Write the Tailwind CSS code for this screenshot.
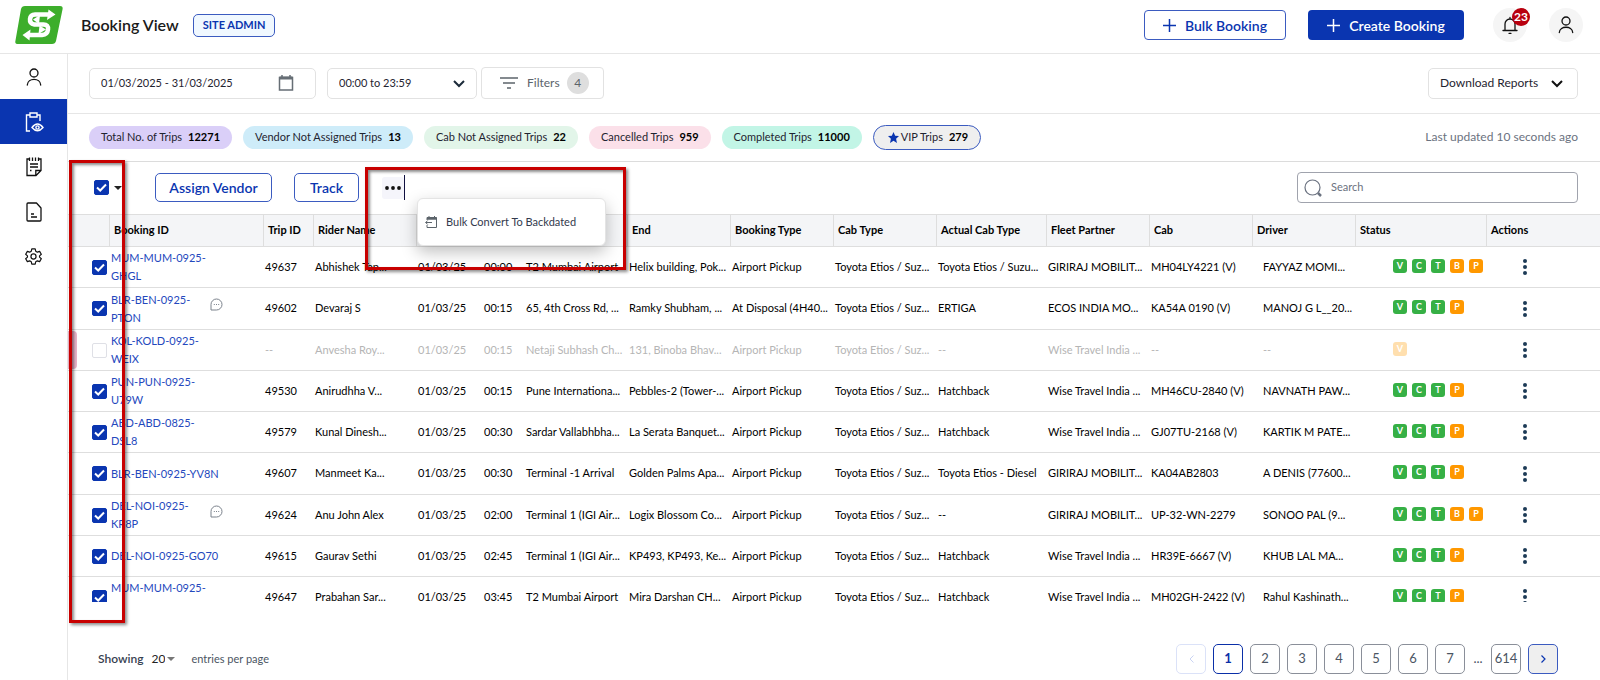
<!DOCTYPE html>
<html lang="en">
<head>
<meta charset="utf-8">
<meta name="viewport" content="width=device-width, initial-scale=1">
<title>Booking View</title>
<script src="https://cdn.jsdelivr.net/npm/@tailwindcss/browser@4"></script>
</head>
<body class="relative flex h-screen flex-col overflow-hidden bg-white font-['Lato',sans-serif] text-[11px] text-[#1f2430]">

<header class="flex h-[54px] shrink-0 items-center border-b border-[#e6e6e6] pr-[17px] pb-[3px] pl-[15px]">
  <svg class="h-[39px] w-[48px]" viewBox="0 0 48 39" aria-label="Logo">
    <path d="M10 0h35q3 0 2.600 3L41 35q-.8 3-4 3H3q-3.300 0-2.600-3L6 3q.8-3 4-3z" fill="#3dae2b"/>
    <path d="M35 8.500H17.500q-3 0-3.500 2.500l-.6 3.500q-.4 3 2.600 3H28M20 13.500h13q3.500 0 3 3l-1.500 8q-.8 3.500-4 3.500H13" fill="none" stroke="#fff" stroke-width="0"/>
    <path d="M34.500 8.500H20q-4.500 0-5 4.500t4.500 5.500H28.500q5 0 4.500 5t-6 5.500H13" fill="none" stroke="#fff" stroke-width="4.500"/>
    <path d="M33.500 3.500 40.500 8.500l-8.500 5.500zM15.500 23.500 7.500 29l7 5.500zM25 9 18 13.500l6 4.500zM24.500 19.500l6.500 4-7.500 4.500z" fill="#fff"/>
  </svg>
  <h1 class="ml-[18px] text-[16px] leading-6 font-semibold text-[#1a1a1a]">Booking View</h1>
  <span class="ml-[14px] flex h-[23px] items-center rounded-[5px] border border-[#3b5bc0] bg-[#f0f8ff] px-[9px] font-bold text-[#0a35b0]">SITE ADMIN</span>
  <div class="ml-auto flex items-center">
    <button class="flex h-[30px] w-[142px] items-center justify-center gap-[9px] rounded-[4px] border border-[#3b5bc0] text-[14px] font-semibold text-[#0a35b0]">
      <svg class="size-[13px]" viewBox="0 0 13 13" stroke="currentColor" stroke-width="1.500"><path d="M6.500 0v13M0 6.500h13"/></svg>Bulk Booking</button>
    <button class="ml-[22px] flex h-[30px] w-[156px] items-center justify-center gap-[9px] rounded-[4px] bg-[#0a35b0] text-[14px] font-semibold text-white">
      <svg class="size-[13px]" viewBox="0 0 13 13" stroke="currentColor" stroke-width="1.500"><path d="M6.500 0v13M0 6.500h13"/></svg>Create Booking</button>
    <button aria-label="Notifications" class="relative ml-[29px] grid size-[34px] place-items-center rounded-full bg-[#f5f5f5]">
      <svg class="size-[20px]" viewBox="0 0 20 20" fill="none" stroke="#111" stroke-width="1.300" stroke-linecap="round"><path d="M3 15.500h14M5 15.500V9a5 5 0 0 1 10 0v6.500M9 18.300h2M10 4V2.500"/></svg>
      <span class="absolute -right-[3px] top-0 grid size-[18px] place-items-center rounded-full bg-[#b8000f] text-[12px] font-bold text-white">23</span>
    </button>
    <button aria-label="Account" class="ml-[22px] grid size-[34px] place-items-center rounded-full bg-[#f5f5f5]">
      <svg class="size-[18px]" viewBox="0 0 18 18" fill="none" stroke="#111" stroke-width="1.300" stroke-linecap="round"><circle cx="9" cy="5" r="4"/><path d="M2.300 16.500c.5-7 13-7 13.400 0"/></svg>
    </button>
  </div>
</header>

<div class="flex min-h-0 flex-1">
  <nav class="flex w-[68px] shrink-0 flex-col border-r border-[#e6e6e6]" aria-label="Main">
    <a href="#" aria-label="Users" class="grid h-[45px] place-items-center text-[#111]"><svg class="size-[18px]" viewBox="0 0 18 18" fill="none" stroke="currentColor" stroke-width="1.300" stroke-linecap="round"><circle cx="9" cy="5" r="4"/><path d="M2.300 17c.5-7.500 13-7.500 13.400 0"/></svg></a>
    <a href="#" aria-label="Bookings" aria-current="page" class="grid h-[45px] place-items-center bg-[#0a35b0] text-white"><svg class="size-[20px]" viewBox="0 0 20 20" fill="none" stroke="currentColor" stroke-width="1.400"><path d="M6 19H2.500V3H6M13 3h3v6"/><path d="M6 1h7v4H6z"/><path d="M8 15.500q5.500-7 11 0-5.500 6.500-11 0z"/><circle cx="13.500" cy="15.500" r="1.600"/></svg></a>
    <a href="#" aria-label="Duty slips" class="grid h-[45px] place-items-center text-[#111]"><svg class="size-[20px]" viewBox="0 0 20 20" fill="none" stroke="currentColor" stroke-width="1.300"><path d="M5.500 2H3v16.500h9l5-5V2h-2.500M11.800 18.500v-5H17"/><path d="M5.500.5V4M8.500.5V4M11.500.5V4M14.500.5V4M6 7h8M6 10h8M6 13.500h1.500" /></svg></a>
    <a href="#" aria-label="Documents" class="grid h-[45px] place-items-center text-[#111]"><svg class="size-[20px]" viewBox="0 0 20 20" fill="none" stroke="currentColor" stroke-width="1.300" stroke-linejoin="round"><path d="M4 1h8.500L17 6v12q0 1-1 1H4q-1 0-1-1V2q0-1 1-1zM7 12h3M7 15h6"/></svg></a>
    <a href="#" aria-label="Settings" class="grid h-[45px] place-items-center text-[#111]"><svg class="size-[17px]" viewBox="0 0 20 20" fill="none" stroke="currentColor" stroke-width="1.400" stroke-linejoin="round"><path d="M8 1h4l.6 2.800 1.900 1.100 2.700-.9 2 3.400-2.100 1.900v1.400l2.100 1.900-2 3.400-2.700-.9-1.900 1.100L12 19H8l-.6-2.800-1.900-1.100-2.700.9-2-3.400 2.100-1.900V9.300L.8 7.400l2-3.400 2.700.9 1.900-1.100z"/><circle cx="10" cy="10" r="3"/></svg></a>
  </nav>

  <main class="flex min-w-0 flex-1 flex-col">
    <section class="flex h-[60px] shrink-0 items-center border-b border-[#e6e6e6] pr-[22px] pb-px pl-[21px]" aria-label="Filters">
      <label class="flex h-[31px] w-[227px] items-center rounded-[5px] border border-[#e2e2e2] px-[11px]">
        <input type="text" aria-label="Date range" value="01/03/2025 - 31/03/2025" class="w-0 flex-1 outline-none">
        <svg class="mr-[10px] size-[16px]" viewBox="0 0 16 16" fill="none" stroke="#666e75" stroke-width="1.500"><path d="M1.500 2.500h13v12.500h-13z"/><path d="M1.500 3h13" stroke-width="3"/><path d="M4 0v2M12 0v2"/></svg>
      </label>
      <div class="relative ml-[11px]">
        <select aria-label="Time range" class="h-[31px] w-[150px] appearance-none rounded-[5px] border border-[#e2e2e2] bg-white px-[11px]"><option>00:00 to 23:59</option></select>
        <svg class="pointer-events-none absolute top-[12px] right-[12px] h-[8px] w-[12px]" viewBox="0 0 12 8" fill="none" stroke="#1c2b3a" stroke-width="2"><path d="m1 1 5 5 5-5"/></svg>
      </div>
      <button class="ml-1 flex h-[32px] w-[123px] items-center rounded-[4px] border border-[#e2e2e2] pl-[18px] text-[12px] text-[#5c646b]">
        <svg class="h-[12px] w-[18px]" viewBox="0 0 18 12" stroke="#5c646b" stroke-width="1.500"><path d="M0 1h18M3 6h12M7 11h4"/></svg>
        <span class="ml-[9px]">Filters</span>
        <span class="ml-[7px] grid size-[22px] place-items-center rounded-full bg-[#dedede]">4</span>
      </button>
      <div class="relative ml-auto">
        <select aria-label="Download Reports" class="h-[31px] w-[150px] appearance-none rounded-[5px] border border-[#e2e2e2] bg-white px-[11px] text-[12px]"><option>Download Reports</option></select>
        <svg class="pointer-events-none absolute top-[12px] right-[15px] h-[8px] w-[12px]" viewBox="0 0 12 8" fill="none" stroke="#111" stroke-width="2"><path d="m1 1 5 5 5-5"/></svg>
      </div>
    </section>

    <section class="flex h-[48px] shrink-0 items-center gap-[11px] border-b border-[#dcdcdc] pr-[22px] pb-px pl-[21px]" aria-label="Trip totals">
      <button class="flex h-[23px] items-center gap-[6px] rounded-full bg-[#dacff8] px-[12px]">Total No. of Trips <b class="text-black">12271</b></button>
      <button class="flex h-[23px] items-center gap-[6px] rounded-full bg-[#ceecf9] px-[12px]">Vendor Not Assigned Trips <b class="text-black">13</b></button>
      <button class="flex h-[23px] items-center gap-[6px] rounded-full bg-[#e2f5e9] px-[12px]">Cab Not Assigned Trips <b class="text-black">22</b></button>
      <button class="flex h-[23px] items-center gap-[6px] rounded-full bg-[#fbe0e9] px-[12px]">Cancelled Trips <b class="text-black">959</b></button>
      <button class="flex h-[23px] items-center gap-[6px] rounded-full bg-[#c2f5e6] px-[12px]">Completed Trips <b class="text-black">11000</b></button>
      <button class="flex h-[25px] items-center gap-[6px] rounded-full border border-[#3b5bc0] bg-[#efefef] pr-[12px] pl-[14px]"><span class="flex items-center gap-[2px]"><svg class="size-[11px]" viewBox="0 0 20 20" fill="#0a35b0"><path d="m10 0 3 6.700 7 .7-5.300 4.800L16.300 20 10 16l-6.300 4 1.600-7.800L0 7.400l7-.7z"/></svg>VIP Trips</span> <b class="text-black">279</b></button>
      <span class="ml-auto text-[12px] text-[#6b7280]">Last updated 10 seconds ago</span>
    </section>

    <section class="flex h-[52px] shrink-0 items-center pr-[22px] pb-px pl-[26px]" aria-label="Actions">
      <label class="relative flex">
        <input type="checkbox" checked aria-label="Select all" class="peer size-[15px] appearance-none rounded-[2px] border border-[#dcdcdc] checked:border-[#0a35b0] checked:bg-[#0a35b0]">
        <svg class="absolute inset-0 hidden size-[15px] peer-checked:block" viewBox="0 0 15 15" fill="none" stroke="#fff" stroke-width="2"><path d="m3 7.500 3.200 3L12 4.500"/></svg>
      </label>
      <button aria-label="Selection options" class="ml-[5px]"><svg class="h-[4px] w-[8px]" viewBox="0 0 8 4"><path d="M0 0h8L4 4z" fill="#222"/></svg></button>
      <button class="ml-[33px] h-[29px] w-[117px] rounded-[5px] border border-[#3b5bc0] text-[14px] font-semibold text-[#0a35b0]">Assign Vendor</button>
      <button class="ml-[22px] h-[29px] w-[65px] rounded-[5px] border border-[#3b5bc0] text-[14px] font-semibold text-[#0a35b0]">Track</button>
      <div class="relative ml-[23px] flex items-center">
        <button aria-label="More actions" class="grid h-[22px] w-[22px] place-items-center rounded-[3px] bg-[#f5f5fb]"><svg class="h-[4px] w-[16px]" viewBox="0 0 16 4" fill="#111"><circle cx="2" cy="2" r="1.900"/><circle cx="8" cy="2" r="1.900"/><circle cx="14" cy="2" r="1.900"/></svg></button>
        <span class="h-[25px] w-px bg-[#101040]"></span>
        <div role="menu" class="absolute top-[23px] left-[35px] z-10 rounded-[6px] border border-[#e4e4e4] bg-white shadow-[0_6px_16px_rgba(0,0,0,0.25)]">
          <button role="menuitem" class="flex h-[46px] w-[187px] items-center gap-[9px] pl-[7px] text-[#333a4d]">
            <svg class="size-[12px]" viewBox="0 0 12 12" fill="none" stroke="#5c646b"><path d="M2 4V1.500h9.500v10H2V9"/><path d="M2 2.500h9.500" stroke-width="2.500"/><path d="M7 6.500H.7M2.700 4.500l-2 2 2 2M4 0v2M9.500 0v2"/></svg>
            Bulk Convert To Backdated</button>
        </div>
      </div>
      <label class="ml-auto flex h-[31px] w-[281px] items-center gap-[9px] rounded-[4px] border border-[#a0a3ad] pl-[6px]">
        <svg class="size-[18px]" viewBox="0 0 18 18" fill="none" stroke="#6b7280"><circle cx="8.500" cy="8.500" r="7.500" stroke-width="1.200"/><path d="m14 14 3 3" stroke-width="2.500"/></svg>
        <input type="search" aria-label="Search" placeholder="Search" class="w-0 flex-1 outline-none placeholder:text-[#6b7280]">
      </label>
    </section>

    <div class="h-[388px] shrink-0 overflow-hidden">
      <table class="w-full table-fixed border-separate border-spacing-0 whitespace-nowrap">
        <colgroup>
          <col class="w-[41px]"><col class="w-[154px]"><col class="w-[50px]"><col class="w-[103px]"><col class="w-[66px]"><col class="w-[42px]"><col class="w-[103px]"><col class="w-[103px]"><col class="w-[103px]"><col class="w-[103px]"><col class="w-[110px]"><col class="w-[103px]"><col class="w-[103px]"><col class="w-[103px]"><col class="w-[131px]"><col>
        </colgroup>
        <thead>
          <tr class="h-[33px] bg-[#f4f5f7] text-left text-black [&>th]:border-y [&>th]:border-y-[#dedede] [&>th]:pl-1 [&>th]:font-bold [&>th+th]:border-l [&>th+th]:border-l-[#dedede]">
            <th aria-label="Select"></th><th>Booking ID</th><th>Trip ID</th><th>Rider Name</th><th aria-label="Date"></th><th aria-label="Time"></th><th aria-label="Start"></th><th>End</th><th>Booking Type</th><th>Cab Type</th><th>Actual Cab Type</th><th>Fleet Partner</th><th>Cab</th><th>Driver</th><th>Status</th><th>Actions</th>
          </tr>
        </thead>
        <tbody id="rows"></tbody>
      </table>
    </div>

    <footer class="flex flex-1 items-center pt-[36px] pr-[42px] pl-[30px]">
      <label class="flex items-center text-[#4b5563]"><b class="text-[12px] font-semibold text-[#374151]">Showing</b>
        <select class="ml-[8px] appearance-none text-[12px] text-[#222]"><option>20</option></select>
        <svg class="ml-[2px] h-[4px] w-[8px]" viewBox="0 0 8 4"><path d="M0 0h8L4 4z" fill="#777"/></svg>
        <span class="ml-[16px]">entries per page</span></label>
      <nav aria-label="Pages" class="ml-auto flex items-center gap-[7px] text-[13px] text-[#4b5563] [&>button]:grid [&>button]:size-[30px] [&>button]:place-items-center [&>button]:rounded-[5px] [&>button]:border">
        <button disabled aria-label="Previous" class="border-[#dbe2f8]"><svg class="h-[8px] w-[5px]" viewBox="0 0 5 8" fill="none" stroke="#c9d3f3"><path d="M4.500.5 1 4l3.500 3.500"/></svg></button>
        <button aria-current="page" class="border-2 border-[#0a2fa8] font-bold text-[#0a2fa8]">1</button>
        <button class="border-[#8a8f99]">2</button>
        <button class="border-[#8a8f99]">3</button>
        <button class="border-[#8a8f99]">4</button>
        <button class="border-[#8a8f99]">5</button>
        <button class="border-[#8a8f99]">6</button>
        <button class="border-[#8a8f99]">7</button>
        <span class="w-[12px] text-center">...</span>
        <button class="border-[#8a8f99]">614</button>
        <button aria-label="Next" class="border-[#3b5bc0] bg-[#efefef]"><svg class="h-[8px] w-[5px]" viewBox="0 0 5 8" fill="none" stroke="#0a35b0" stroke-width="1.200"><path d="M.5.5 4 4 .5 7.500"/></svg></button>
      </nav>
    </footer>
  </main>
</div>

<!-- Highlight frames -->
<div class="pointer-events-none absolute top-[160px] left-[69px] z-20 h-[463px] w-[56px] border-[3px] border-[#c80000] shadow-[2px_2px_3px_rgba(0,0,0,0.45),inset_2px_2px_3px_rgba(0,0,0,0.45)]"></div>
<div class="pointer-events-none absolute top-[167px] left-[365px] z-20 h-[103px] w-[261px] border-[3px] border-[#c80000] shadow-[2px_2px_3px_rgba(0,0,0,0.45),inset_2px_2px_3px_rgba(0,0,0,0.45)]"></div>

<script>
// id, trip, rider, time, start, end, type, cab type, actual cab, fleet, cab, driver, status, has comment
const rows = [
  ["MUM-MUM-0925-<br>GHGL","49637","Abhishek Tap...","00:00","T2 Mumbai Airport","Helix building, Pok...","Airport Pickup","Toyota Etios / Suz...","Toyota Etios / Suzu...","GIRIRAJ MOBILIT...","MH04LY4221 (V)","FAYYAZ MOMI...","VCTBP",0],
  ["BLR-BEN-0925-<br>PTON","49602","Devaraj S","00:15","65, 4th Cross Rd, ...","Ramky Shubham, ...","At Disposal (4H40...","Toyota Etios / Suz...","ERTIGA","ECOS INDIA MO...","KA54A 0190 (V)","MANOJ G L__20...","VCTP",1],
  ["KOL-KOLD-0925-<br>WEIX","--","Anvesha Roy...","00:15","Netaji Subhash Ch...","131, Binoba Bhav...","Airport Pickup","Toyota Etios / Suz...","--","Wise Travel India ...","--","--","V",0],
  ["PUN-PUN-0925-<br>U79W","49530","Anirudhha V...","00:15","Pune Internationa...","Pebbles-2 (Tower-...","Airport Pickup","Toyota Etios / Suz...","Hatchback","Wise Travel India ...","MH46CU-2840 (V)","NAVNATH PAW...","VCTP",0],
  ["ABD-ABD-0825-<br>DSL8","49579","Kunal Dinesh...","00:30","Sardar Vallabhbha...","La Serata Banquet...","Airport Pickup","Toyota Etios / Suz...","Hatchback","Wise Travel India ...","GJ07TU-2168 (V)","KARTIK M PATE...","VCTP",0],
  ["BLR-BEN-0925-YV8N","49607","Manmeet Ka...","00:30","Terminal -1 Arrival","Golden Palms Apa...","Airport Pickup","Toyota Etios / Suz...","Toyota Etios - Diesel","GIRIRAJ MOBILIT...","KA04AB2803","A DENIS (77600...","VCTP",0],
  ["DEL-NOI-0925-<br>KR8P","49624","Anu John Alex","02:00","Terminal 1 (IGI Air...","Logix Blossom Co...","Airport Pickup","Toyota Etios / Suz...","--","GIRIRAJ MOBILIT...","UP-32-WN-2279","SONOO PAL (9...","VCTBP",1],
  ["DEL-NOI-0925-GO70","49615","Gaurav Sethi","02:45","Terminal 1 (IGI Air...","KP493, KP493, Ke...","Airport Pickup","Toyota Etios / Suz...","Hatchback","Wise Travel India ...","HR39E-6667 (V)","KHUB LAL MA...","VCTP",0],
  ["MUM-MUM-0925-<br>&nbsp;","49647","Prabahan Sar...","03:45","T2 Mumbai Airport","Mira Darshan CH...","Airport Pickup","Toyota Etios / Suz...","Hatchback","Wise Travel India ...","MH02GH-2422 (V)","Rahul Kashinath...","VCTP",0],
];
const comment = `<svg class="mb-2 size-[13px]" viewBox="0 0 13 13" fill="none" stroke="#7b828c"><path d="M1 12V6.500A5.500 5.500 0 1 1 6.500 12z"/><path d="M3.800 6.500h1M6 6.500h1M8.200 6.500h1"/></svg>`;
document.getElementById("rows").innerHTML = rows.map(r => {
  const off = r[1] === "--";
  const badges = [...r[12]].map(c => {
    const color = off ? "bg-[#ffdfae]" : c === "B" || c === "P" ? "bg-[#ff9800]" : "bg-[#36b045]";
    return `<span class="grid size-[14px] place-items-center rounded-[3px] text-[9px] font-bold text-white ${color}">${c}</span>`;
  }).join("");
  const cell = t => `<td>${t}</td>`;
  return `<tr class="h-[41px] nth-[4n+2]:h-[42px] ${off ? "text-[#b5b5b5]" : "text-black"} [&>td]:border-b [&>td]:border-[#dedede] [&>td]:pl-[2px]">
    <td class="pl-0!"><div class="relative flex h-[38px] items-center">${off ? `<span class="h-full w-[9px] rounded-r-[4px] bg-[#e8b4c8]"></span>` : `<span class="w-[9px]"></span>`}
      <label class="relative ml-[15px] flex"><input type="checkbox" aria-label="Select booking" ${off ? "disabled" : "checked"} class="peer size-[15px] appearance-none rounded-[2px] border border-[#dfe0e6] checked:border-[#0a35b0] checked:bg-[#0a35b0]">
      <svg class="absolute inset-0 hidden size-[15px] peer-checked:block" viewBox="0 0 15 15" fill="none" stroke="#fff" stroke-width="2"><path d="m3 7.500 3.200 3L12 4.500"/></svg></label></div></td>
    <td><div class="flex items-center"><a href="#" class="w-[99px] leading-[18px] text-[#2448bd]">${r[0]}</a>${r[13] ? comment : ""}</div></td>
    ${cell(r[1])}${cell(r[2])}${cell("01/03/25")}${r.slice(3, 11).map(cell).join("")}
    <td><span class="ml-[9px]">${r[11]}</span></td>
    <td><div class="mb-[3px] ml-[36px] flex gap-[5px]">${badges}</div></td>
    <td><button aria-label="Row actions" class="ml-[35px] flex"><svg class="h-[16px] w-[4px]" viewBox="0 0 4 16" fill="#1c3a56"><circle cx="2" cy="2" r="2"/><circle cx="2" cy="8" r="2"/><circle cx="2" cy="14" r="2"/></svg></button></td>
  </tr>`;
}).join("");
</script>
</body>
</html>
